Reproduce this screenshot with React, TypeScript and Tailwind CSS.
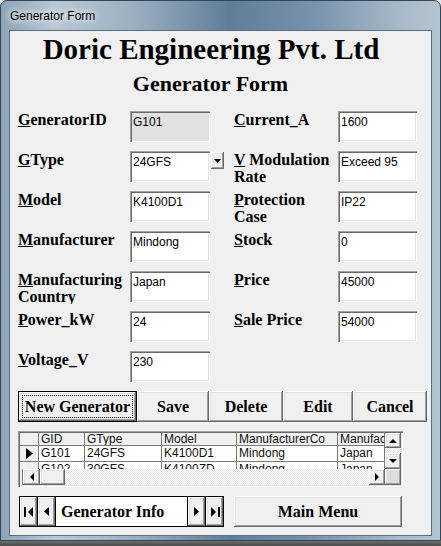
import React from "react";

const raised =
  "shadow-[inset_-1px_-1px_0_#696969,inset_1px_1px_0_#ffffff,inset_-2px_-2px_0_#a0a0a0,inset_2px_2px_0_#e3e3e3]";
const sunken =
  "shadow-[inset_1px_1px_0_#a0a0a0,inset_2px_2px_0_#696969,inset_-1px_-1px_0_#ffffff,inset_-2px_-2px_0_#e3e3e3]";

type Lbl = [string, string];
type Row = {
  l: Lbl;
  v: string;
  disabled?: boolean;
  combo?: boolean;
  r?: { l: Lbl; v: string };
};

const rows: Row[] = [
  { l: ["G", "eneratorID"], v: "G101", disabled: true, r: { l: ["C", "urrent_A"], v: "1600" } },
  { l: ["G", "Type"], v: "24GFS", combo: true, r: { l: ["V", " Modulation Rate"], v: "Exceed 95" } },
  { l: ["M", "odel"], v: "K4100D1", r: { l: ["P", "rotection Case"], v: "IP22" } },
  { l: ["M", "anufacturer"], v: "Mindong", r: { l: ["S", "tock"], v: "0" } },
  { l: ["M", "anufacturing Country"], v: "Japan", r: { l: ["P", "rice"], v: "45000" } },
  { l: ["P", "ower_kW"], v: "24", r: { l: ["S", "ale Price"], v: "54000" } },
  { l: ["V", "oltage_V"], v: "230" },
];

function Label({ l, w }: { l: Lbl; w: string }) {
  return (
    <div
      className={`${w} h-[33px] overflow-hidden text-[16px] leading-[17px] font-bold text-black font-['Liberation_Serif',serif]`}
    >
      <u>{l[0]}</u>
      {l[1]}
    </div>
  );
}

function Box({ v, w, disabled }: { v: string; w: string; disabled?: boolean }) {
  return (
    <div
      className={`${w} h-[31px] shrink-0 ${disabled ? "bg-[#e1e1e1]" : "bg-white"} ${sunken} pl-[3px] pt-[4px] text-[12px] leading-[14px] text-black font-['Liberation_Sans',sans-serif] whitespace-nowrap overflow-hidden`}
    >
      {v}
    </div>
  );
}

function Btn({ children, w, focus }: { children: React.ReactNode; w: string; focus?: boolean }) {
  if (focus) {
    return (
      <div className={`${w} h-[31px] border border-black bg-[#f0f0f0] ${raised} p-[3px]`}>
        <div className="w-full h-full border border-dotted border-black flex items-center justify-center text-[16px] font-bold font-['Liberation_Serif',serif] text-black whitespace-nowrap">
          {children}
        </div>
      </div>
    );
  }
  return (
    <div
      className={`${w} h-[31px] bg-[#f0f0f0] ${raised} flex items-center justify-center text-[16px] font-bold font-['Liberation_Serif',serif] text-black whitespace-nowrap`}
    >
      {children}
    </div>
  );
}

const gridCell =
  "border-r border-b border-[#7a7a7a] pl-[2px] overflow-hidden whitespace-nowrap text-[12px] text-[#111] font-['Liberation_Sans',sans-serif]";

const cols = ["w-[46px]", "w-[77px]", "w-[75px]", "w-[101px]", "flex-1"];
const header = ["GID", "GType", "Model", "ManufacturerCo", "ManufacturingCountry"];
const data = [
  ["G101", "24GFS", "K4100D1", "Mindong", "Japan"],
  ["G102", "30GFS", "K4100ZD", "Mindong", "Japan"],
];

function Tri({ dir }: { dir: "l" | "r" | "u" | "d" }) {
  const d =
    dir === "r"
      ? "M0 0L4 4L0 8Z"
      : dir === "l"
      ? "M4 0L0 4L4 8Z"
      : dir === "u"
      ? "M0 4L4 0L8 4Z"
      : "M0 0L8 0L4 4Z";
  const size = dir === "l" || dir === "r" ? { w: 4, h: 8 } : { w: 8, h: 4 };
  return (
    <svg width={size.w} height={size.h} viewBox={`0 0 ${size.w} ${size.h}`}>
      <path d={d} fill="#000" />
    </svg>
  );
}

function DataGrid() {
  return (
    <div className={`w-[385px] h-[56px] bg-[#f0f0f0] ${sunken} p-[2px] flex flex-col`}>
      <div className="flex h-[36px] overflow-hidden">
        <div className="flex-1 flex flex-col overflow-hidden bg-white">
          <div className="flex h-[13px] bg-[#f0f0f0] leading-[12px] shrink-0">
            <div className="w-[19px] border-r border-b border-[#7a7a7a] bg-[#f0f0f0]" />
            {header.map((h, i) => (
              <div key={i} className={`${cols[i]} ${gridCell}`}>
                {h}
              </div>
            ))}
          </div>
          {data.map((r, ri) => (
            <div key={ri} className="flex h-[16px] leading-[15px] shrink-0">
              <div className="w-[19px] border-r border-b border-[#7a7a7a] bg-[#f0f0f0] flex items-center justify-center">
                {ri === 0 ? (
                  <svg width="7" height="11" viewBox="0 0 7 11">
                    <path d="M0 0L7 5.5L0 11Z" fill="#000" />
                  </svg>
                ) : null}
              </div>
              {r.map((c, i) => (
                <div key={i} className={`${cols[i]} ${gridCell} bg-white`}>
                  {c}
                </div>
              ))}
            </div>
          ))}
        </div>
        <div className="w-[16px] flex flex-col bg-[#f0f0f0]">
          <div className={`h-[15px] ${raised} bg-[#f0f0f0] flex items-center justify-center`}>
            <Tri dir="u" />
          </div>
          <div className="flex-1 bg-[repeating-conic-gradient(#ffffff_0_25%,#e6e6e6_0_50%)] bg-[length:2px_2px]" />
          <div className={`h-[16px] ${raised} bg-[#f0f0f0] flex items-center justify-center`}>
            <Tri dir="d" />
          </div>
        </div>
      </div>
      <div className="flex h-[16px]">
        <div className="w-[3px] bg-[#f0f0f0] border-r border-[#7a7a7a]" />
        <div className={`w-[17px] ${raised} bg-[#f0f0f0] flex items-center justify-center`}>
          <Tri dir="l" />
        </div>
        <div className={`w-[25px] ${raised} bg-[#f0f0f0]`} />
        <div className="flex-1 bg-[repeating-conic-gradient(#ffffff_0_25%,#e6e6e6_0_50%)] bg-[length:2px_2px]" />
        <div className={`w-[16px] ${raised} bg-[#f0f0f0] flex items-center justify-center`}>
          <Tri dir="r" />
        </div>
        <div className={`w-[16px] bg-[#dcdcdc] ${raised}`} />
      </div>
    </div>
  );
}

function NavBtn({ children, border }: { children: React.ReactNode; border: string }) {
  return (
    <div className={`w-[18px] h-full ${border} border-black bg-[#f0f0f0] ${raised} flex items-center justify-center`}>
      {children}
    </div>
  );
}

function Nav() {
  return (
    <div className="w-[205px] h-[31px] border border-black flex bg-white">
      <NavBtn border="border-r">
        <svg width="10" height="10" viewBox="0 0 10 10">
          <rect x="0" y="0" width="2" height="10" fill="#000" />
          <path d="M9 0L4 5L9 10Z" fill="#000" />
        </svg>
      </NavBtn>
      <NavBtn border="border-r">
        <svg width="5" height="9" viewBox="0 0 5 9">
          <path d="M5 0L0 4.5L5 9Z" fill="#000" />
        </svg>
      </NavBtn>
      <div className="flex-1 bg-white flex items-center pl-[5px] text-[16px] font-bold font-['Liberation_Serif',serif] text-black whitespace-nowrap">
        Generator Info
      </div>
      <NavBtn border="border-l">
        <svg width="5" height="9" viewBox="0 0 5 9">
          <path d="M0 0L5 4.5L0 9Z" fill="#000" />
        </svg>
      </NavBtn>
      <NavBtn border="border-l">
        <svg width="10" height="10" viewBox="0 0 10 10">
          <path d="M1 0L6 5L1 10Z" fill="#000" />
          <rect x="8" y="0" width="2" height="10" fill="#000" />
        </svg>
      </NavBtn>
    </div>
  );
}

export default function App() {
  return (
    <div className="w-[441px] h-[546px] overflow-hidden bg-[linear-gradient(to_bottom,#e4e4e4_0%,#e4e4e4_96%,#4a4a4a_100%)]">
      <div className="w-[441px] h-[541px] rounded-t-[7px] border border-[#34475a] flex flex-col bg-[linear-gradient(90deg,#8ea3b6_0%,#b9c7d3_12%,#9db0c1_30%,#5f7e98_52%,#7994ac_72%,#a7b8c7_90%,#b4c3cf_100%)]">
        <div className="h-[29px] shrink-0 flex items-center pl-[9px] text-[12px] leading-[14px] text-black font-['Liberation_Sans',sans-serif] [text-shadow:0_0_6px_#ffffff,0_0_10px_#ffffff]">
          Generator Form
        </div>
        <div className="flex-1 px-[8px] pb-[4px] flex">
          <div className="flex-1 border border-[#5a6d7e] bg-[#f0f0f0] flex flex-col">
            <div className="pt-[2px] pr-[19px] text-center text-[29px] leading-[32px] font-bold text-black font-['Liberation_Serif',serif] whitespace-nowrap">
              Doric Engineering Pvt. Ltd
            </div>
            <div className="mt-[6px] pr-[20px] text-center text-[22px] leading-[26px] font-bold text-black font-['Liberation_Serif',serif] whitespace-nowrap">
              Generator Form
            </div>
            <div className="mt-[14px] pl-[8px] flex flex-col">
              {rows.map((r, i) => (
                <div key={i} className="h-[40px] flex items-start">
                  <Label l={r.l} w="w-[112px]" />
                  <Box v={r.v} w="w-[80px]" disabled={r.disabled} />
                  <div className="w-[24px] h-[31px]">
                    {r.combo ? (
                      <div className={`ml-[1px] mt-[1px] w-[13px] h-[17px] bg-[#f0f0f0] ${raised} flex items-center justify-center`}>
                        <svg width="7" height="4" viewBox="0 0 7 4">
                          <path d="M0 0H7L3.5 4Z" fill="#000" />
                        </svg>
                      </div>
                    ) : null}
                  </div>
                  {r.r ? (
                    <>
                      <Label l={r.r.l} w="w-[104px]" />
                      <Box v={r.r.v} w="w-[79px]" />
                    </>
                  ) : null}
                </div>
              ))}
            </div>
            <div className="pl-[8px] flex">
              <Btn w="w-[119px]" focus>
                New Generator
              </Btn>
              <Btn w="w-[72px]">Save</Btn>
              <Btn w="w-[74px]">Delete</Btn>
              <Btn w="w-[70px]">Edit</Btn>
              <Btn w="w-[74px]">Cancel</Btn>
            </div>
            <div className="mt-[9px] pl-[8px] flex">
              <DataGrid />
            </div>
            <div className="mt-[9px] pl-[9px] flex gap-[10px]">
              <Nav />
              <Btn w="w-[168px]">Main Menu</Btn>
            </div>
          </div>
        </div>
      </div>
    </div>
  );
}
